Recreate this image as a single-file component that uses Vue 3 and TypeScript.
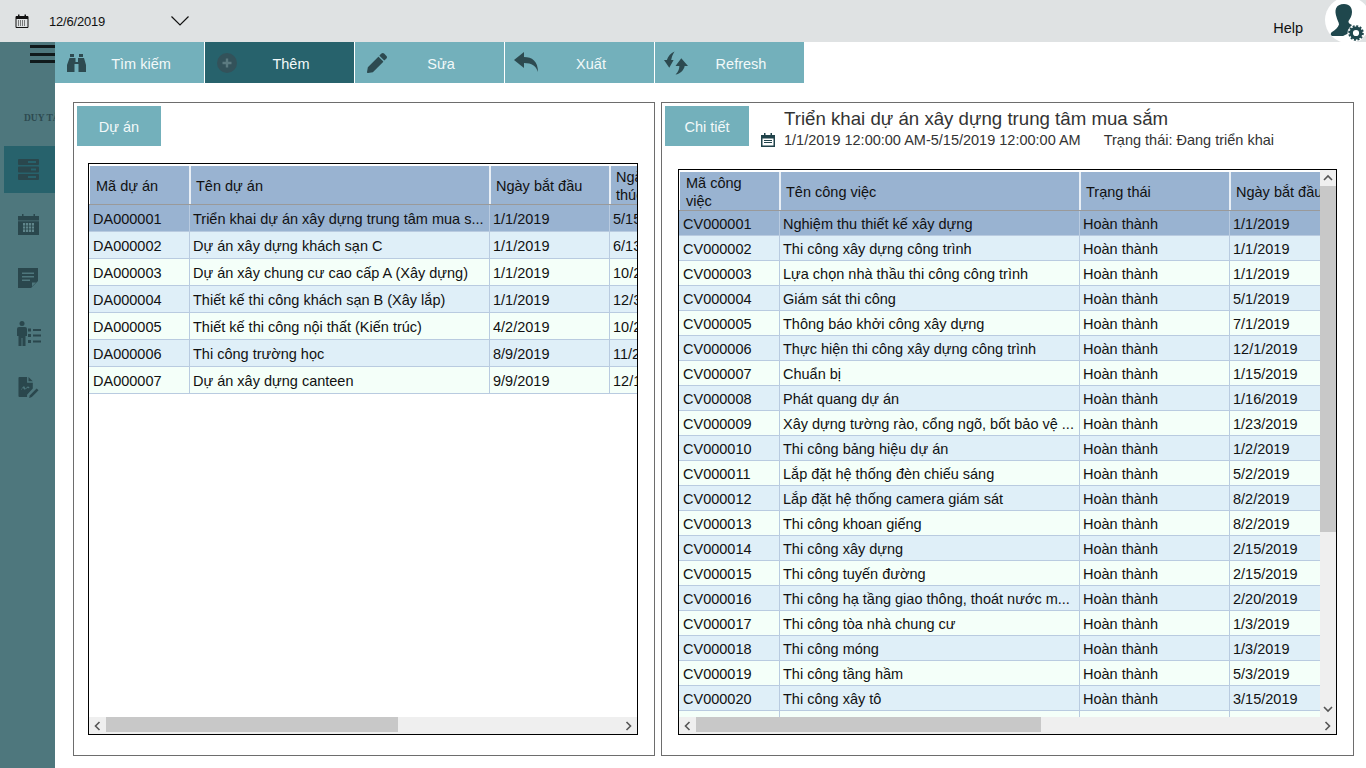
<script setup lang="ts">
const projects = [
  ['DA000001', 'Triển khai dự án xây dựng trung tâm mua s...', '1/1/2019', '5/15/2019'],
  ['DA000002', 'Dự án xây dựng khách sạn C', '1/1/2019', '6/13/2019'],
  ['DA000003', 'Dự án xây chung cư cao cấp A (Xây dựng)', '1/1/2019', '10/2/2019'],
  ['DA000004', 'Thiết kế thi công khách sạn B (Xây lắp)', '1/1/2019', '12/3/2019'],
  ['DA000005', 'Thiết kế thi công nội thất (Kiến trúc)', '4/2/2019', '10/2/2019'],
  ['DA000006', 'Thi công trường học', '8/9/2019', '11/2/2019'],
  ['DA000007', 'Dự án xây dựng canteen', '9/9/2019', '12/1/2019']
]

const tasks = [
  ['CV000001', 'Nghiệm thu thiết kế xây dựng', '1/1/2019'],
  ['CV000002', 'Thi công xây dựng công trình', '1/1/2019'],
  ['CV000003', 'Lựa chọn nhà thầu thi công công trình', '1/1/2019'],
  ['CV000004', 'Giám sát thi công', '5/1/2019'],
  ['CV000005', 'Thông báo khởi công xây dựng', '7/1/2019'],
  ['CV000006', 'Thực hiện thi công xây dựng công trình', '12/1/2019'],
  ['CV000007', 'Chuẩn bị', '1/15/2019'],
  ['CV000008', 'Phát quang dự án', '1/16/2019'],
  ['CV000009', 'Xây dựng tường rào, cổng ngõ, bốt bảo vệ ...', '1/23/2019'],
  ['CV000010', 'Thi công bảng hiệu dự án', '1/2/2019'],
  ['CV000011', 'Lắp đặt hệ thống đèn chiếu sáng', '5/2/2019'],
  ['CV000012', 'Lắp đặt hệ thống camera giám sát', '8/2/2019'],
  ['CV000013', 'Thi công khoan giếng', '8/2/2019'],
  ['CV000014', 'Thi công xây dựng', '2/15/2019'],
  ['CV000015', 'Thi công tuyến đường', '2/15/2019'],
  ['CV000016', 'Thi công hạ tầng giao thông, thoát nước m...', '2/20/2019'],
  ['CV000017', 'Thi công tòa nhà chung cư', '1/3/2019'],
  ['CV000018', 'Thi công móng', '1/3/2019'],
  ['CV000019', 'Thi công tầng hầm', '5/3/2019'],
  ['CV000020', 'Thi công xây tô', '3/15/2019']
]

const toolbar = ['Tìm kiếm', 'Thêm', 'Sửa', 'Xuất', 'Refresh']
</script>

<template>
  <div class="app">
    <header class="topbar">
      <svg class="date-icon" viewBox="0 0 14 14">
        <path d="M1 2.5h12v11H1z" fill="none" stroke="#111" />
        <path d="M1 2h12v3H1zM3 0.5h1.5v2.5H3zM9.5 0.5H11v2.5H9.5z" fill="#111" />
        <path d="M3 7h8M3 9h8M3 11h8" stroke="#111" stroke-dasharray="1 1" fill="none" />
      </svg>
      <span class="date-text">12/6/2019</span>
      <svg class="chevron" viewBox="0 0 18 10"><path d="M0.5 0.5L9 9l8.5-8.5" fill="none" stroke="#111" stroke-width="1.2" /></svg>
      <span class="help">Help</span>
      <div class="avatar">
        <svg viewBox="0 0 41 41" width="41" height="41">
          <path d="M19 4C25 4 27 8 27 12C27 16 25 19 23.500 21C23 23 25 24 27 25C25 27 24 30 24 33L18 36H8C5.500 36 5 33.500 7 32C10 30 13 28 14 24.500C14 22 12 20 11.500 17C10.500 14 10 11 11 8.500C12 5.500 15 4 19 4z" fill="#1f474d" />
          <circle cx="31" cy="33" r="8.500" fill="#fff" />
          <circle cx="31" cy="33" r="4.800" fill="none" stroke="#1f474d" stroke-width="3.400" />
          <circle cx="31" cy="33" r="6.800" fill="none" stroke="#1f474d" stroke-width="2" stroke-dasharray="2 1.560" />
        </svg>
      </div>
    </header>

    <div class="body">
      <aside class="sidebar">
        <div class="burger"><i></i><i></i><i></i></div>
        <div class="brand">DUY TÂN</div>
        <div class="side-item active">
          <svg viewBox="0 0 21 21">
            <path fill-rule="evenodd" d="M1 0h19a1 1 0 0 1 1 1v4a1 1 0 0 1-1 1H1a1 1 0 0 1-1-1V1a1 1 0 0 1 1-1zm9 2v2h8V2zM1 7.500h19a1 1 0 0 1 1 1v4a1 1 0 0 1-1 1H1a1 1 0 0 1-1-1v-4a1 1 0 0 1 1-1zm12 2v2h5v-2zM1 15h19a1 1 0 0 1 1 1v4a1 1 0 0 1-1 1H1a1 1 0 0 1-1-1v-4a1 1 0 0 1 1-1zm9 2v2h8v-2z" />
          </svg>
        </div>
        <div class="side-item">
          <svg viewBox="0 0 21 21">
            <path d="M0 2h4V0h1.500v2h10V0H17v2h4v4.500H0zM0 7.200h21V21H0z" />
            <path d="M5 9h11v9H5z" fill="#5f858b" />
            <path d="M7.500 9v9M10.500 9v9M13.500 9v9M5 12h11M5 15h11" stroke="#2a474d" stroke-width="0.800" fill="none" />
          </svg>
        </div>
        <div class="side-item">
          <svg viewBox="0 0 21 21">
            <path fill-rule="evenodd" d="M0 0h20v13l-7 7H0zM4 4.500v1.500h12V4.500zm0 3.500v1.500h12V8zm0 3.500V13h8v-1.500zM14 14.500v4l4-4z" />
          </svg>
        </div>
        <div class="side-item">
          <svg viewBox="0 0 24 25">
            <circle cx="5" cy="2.500" r="2.500" />
            <path d="M0 8a2 2 0 0 1 2-2h6a2 2 0 0 1 2 2v7H8.500v10H5.500v-8h-1v8H1.500V15H0zM11 7.500h3v3h-3zM16 8h8v2h-8zM11 13h3v3h-3zM16 13.500h8v2h-8zM11 19h3v3h-3zM16 19.500h8v2h-8z" />
          </svg>
        </div>
        <div class="side-item">
          <svg viewBox="0 0 21 22">
            <path fill-rule="evenodd" d="M0 1a1 1 0 0 1 1-1h8v6h6v6l-6 6.500V21H1a1 1 0 0 1-1-1zM10.500 0L15 4.500h-4.500zM3 13c1.500-3 3-4 3.500-2.500S7 13 8.500 11s2-1 3 0l-.5 1c-1-1-1.500-1-2.500 0-2 2-3 1-3.500-.5-.5-.5-1 .5-1.500 2z" />
            <path d="M12 19l7-7 2 2-7 7-3 1z" />
          </svg>
        </div>
      </aside>

      <main class="content">
        <nav class="toolbar">
          <div v-for="(label, i) in toolbar" :key="label" class="tool" :class="{ active: i === 1 }">
            <svg v-if="i === 0" class="tool-icon" viewBox="0 0 20 20">
              <path d="M3 1h4v3H3zM12 1h4v3h-4zM2.500 5h6v4H11V5h6l2 7v7h-7.500v-8h-4v8H0v-7z" />
            </svg>
            <svg v-else-if="i === 1" class="tool-icon" viewBox="0 0 20 20">
              <circle cx="10" cy="10" r="10" fill="#33525a" />
              <path d="M8.800 5.500h2.400v3.300h3.300v2.400h-3.300v3.300H8.800v-3.300H5.500V8.800h3.300z" fill="#5b7a80" />
            </svg>
            <svg v-else-if="i === 2" class="tool-icon" viewBox="0 0 512 512">
              <path d="M497.900 142.100l-46.100 46.100c-4.700 4.700-12.300 4.700-17 0l-111-111c-4.700-4.700-4.700-12.300 0-17l46.100-46.100c18.700-18.700 49.100-18.700 67.900 0l60.100 60.100c18.800 18.700 18.800 49.100 0 67.900zM284.200 99.800L21.600 362.400.4 483.900c-2.900 16.400 11.400 30.600 27.800 27.800l121.500-21.300 262.600-262.600c4.700-4.700 4.700-12.300 0-17l-111-111c-4.800-4.700-12.400-4.700-17.100 0z" />
            </svg>
            <svg v-else-if="i === 3" class="tool-icon wide" viewBox="0 0 24 22">
              <path d="M0 8L10 0v5c8 0 14 4 14 15-2-6-6-9-14-9v5z" />
            </svg>
            <svg v-else class="tool-icon wide refresh" viewBox="0 0 25 24">
              <path d="M11 0C7 2 4 5 3 9H0L5.500 17L10 9H7.500C8 6 9 3 11 0z" />
              <path d="M18 7L25 15H21.500C21 19 17 23 12 24C15 21 16 18 16 15H12z" />
            </svg>
            <span class="tool-label">{{ label }}</span>
          </div>
        </nav>

        <div class="panels">
          <section class="panel left">
            <div class="panel-head">
              <div class="tab">Dự án</div>
            </div>
            <div class="grid">
              <div class="grid-main">
                <div class="viewport">
                  <div class="head row-cols">
                    <div class="hcell">Mã dự án</div>
                    <div class="hcell">Tên dự án</div>
                    <div class="hcell">Ngày bắt đầu</div>
                    <div class="hcell">Ngày kết thúc</div>
                  </div>
                  <div v-for="(p, i) in projects" :key="p[0]" class="row row-cols" :class="{ selected: i === 0, alt: i % 2 === 1 }">
                    <div v-for="(c, j) in p" :key="j" class="cell">{{ c }}</div>
                  </div>
                </div>
              </div>
              <div class="hbar">
                <svg class="arrow" viewBox="0 0 8 10"><path d="M6 1L2 5l4 4" /></svg>
                <div class="track"><div class="thumb"></div></div>
                <svg class="arrow" viewBox="0 0 8 10"><path d="M2 1l4 4-4 4" /></svg>
              </div>
            </div>
          </section>

          <section class="panel right">
            <div class="panel-head">
              <div class="tab">Chi tiết</div>
              <div class="info">
                <div class="info-title">Triển khai dự án xây dựng trung tâm mua sắm</div>
                <div class="info-line">
                  <svg class="info-icon" viewBox="0 0 14 14">
                    <path fill-rule="evenodd" d="M0 2h3V0h1.500v2h5V0H11v2h3v12H0zm1.500 3.500V12.500h11V5.500zM3 7h8v1H3zm0 2h8v1H3z" />
                  </svg>
                  <span class="info-date">1/1/2019 12:00:00 AM-5/15/2019 12:00:00 AM</span>
                  <span>Trạng thái: Đang triển khai</span>
                </div>
              </div>
            </div>
            <div class="grid">
              <div class="grid-main">
                <div class="viewport">
                  <div class="head row-cols">
                    <div class="hcell">Mã công việc</div>
                    <div class="hcell">Tên công việc</div>
                    <div class="hcell">Trạng thái</div>
                    <div class="hcell">Ngày bắt đầu</div>
                  </div>
                  <div v-for="(t, i) in tasks" :key="t[0]" class="row row-cols" :class="{ selected: i === 0, alt: i % 2 === 1 }">
                    <div class="cell">{{ t[0] }}</div>
                    <div class="cell">{{ t[1] }}</div>
                    <div class="cell">Hoàn thành</div>
                    <div class="cell">{{ t[2] }}</div>
                  </div>
                  <div class="row row-cols">
                    <div class="cell"></div><div class="cell"></div><div class="cell"></div><div class="cell"></div>
                  </div>
                </div>
                <div class="vbar">
                  <svg class="arrow" viewBox="0 0 10 8"><path d="M1 6l4-4 4 4" /></svg>
                  <div class="vtrack"><div class="vthumb"></div></div>
                  <svg class="arrow" viewBox="0 0 10 8"><path d="M1 2l4 4 4-4" /></svg>
                </div>
              </div>
              <div class="hbar">
                <svg class="arrow" viewBox="0 0 8 10"><path d="M6 1L2 5l4 4" /></svg>
                <div class="track"><div class="thumb"></div></div>
                <svg class="arrow" viewBox="0 0 8 10"><path d="M2 1l4 4-4 4" /></svg>
              </div>
            </div>
          </section>
        </div>
      </main>
    </div>
  </div>
</template>

<style scoped>
.app {
  width: 1366px;
  height: 768px;
  display: flex;
  flex-direction: column;
  overflow: hidden;
  background: #fff;
  color: #111;
  font-family: "Liberation Sans", Arial, sans-serif;
  font-size: 14.5px;
}

.topbar {
  height: 42px;
  flex: none;
  display: flex;
  align-items: center;
  background: #dfe2e3;
  position: relative;
  overflow: hidden;
}

.date-icon {
  width: 14px;
  height: 14px;
  margin-left: 15px;
}

.date-text {
  margin-left: 20px;
  font-size: 13px;
  letter-spacing: -0.2px;
}

.chevron {
  width: 18px;
  height: 10px;
  margin-left: 66px;
  margin-top: -1px;
}

.help {
  margin-left: auto;
  margin-right: 63px;
  margin-top: 14px;
}

.avatar {
  position: absolute;
  left: 1325px;
  top: -3px;
  width: 46px;
  height: 46px;
  padding-top: 3px;
  box-sizing: border-box;
  background: #fff;
  border-radius: 50%;
}

.avatar svg {
  display: block;
}

.body {
  flex: 1;
  display: flex;
  min-height: 0;
}

.sidebar {
  width: 55px;
  flex: none;
  background: #4e777d;
  display: flex;
  flex-direction: column;
  overflow: hidden;
}

.burger {
  display: flex;
  flex-direction: column;
  gap: 4.500px;
  margin: 3px 0 0 30px;
  height: 18px;
}

.burger i {
  display: block;
  height: 3px;
  background: #10191b;
}

.brand {
  margin: 50px 0 0 24px;
  height: 33px;
  white-space: nowrap;
  font-family: "Liberation Serif", serif;
  font-weight: bold;
  font-size: 9.500px;
  color: #2d4a50;
}

.side-item {
  height: 47px;
  margin: 0 0 7.500px 4px;
  padding-left: 14px;
  display: flex;
  align-items: center;
  flex: none;
}

.side-item.active {
  background: #27626c;
}

.side-item svg {
  width: 21px;
  height: 21px;
  fill: #2a474d;
}

.side-item:nth-child(6) svg {
  width: 24px;
  height: 25px;
  margin-left: -1px;
}

.content {
  flex: 1;
  display: flex;
  flex-direction: column;
  min-width: 0;
}

.toolbar {
  height: 41px;
  flex: none;
  display: flex;
  gap: 1px;
  width: 749px;
}

.tool {
  width: 149px;
  flex: none;
  display: flex;
  align-items: center;
  padding-left: 12px;
  box-sizing: border-box;
  background: #73b0bb;
  color: #f2f9f9;
}

.tool.active {
  background: #27626c;
}

.tool-icon {
  width: 20px;
  height: 20px;
  flex: none;
  fill: #2d4a50;
  overflow: visible;
}

.tool-icon.wide {
  width: 24px;
  height: 22px;
  margin-left: -3px;
  margin-right: -1px;
}

.tool-icon.refresh {
  height: 24px;
}

.tool-label {
  flex: 1;
  text-align: center;
  padding: 2px 9px 0 0;
}

.panels {
  flex: 1;
  display: flex;
  gap: 6px;
  padding: 19px 12px 12px 18px;
  min-height: 0;
}

.panel {
  border: 1px solid #6d6d6d;
  box-sizing: border-box;
  padding: 3px 16px 20px 3px;
  display: flex;
  flex-direction: column;
}

.panel.left {
  width: 582px;
}

.panel.right {
  width: 693px;
}

.panel-head {
  display: flex;
  flex: none;
}

.left .panel-head {
  margin-bottom: 17px;
}

.right .panel-head {
  margin-bottom: 23px;
}

.tab {
  width: 84px;
  height: 40px;
  flex: none;
  display: flex;
  align-items: center;
  justify-content: center;
  padding-top: 1px;
  box-sizing: border-box;
  background: #73b0bb;
  color: #f2f9f9;
}

.info {
  margin-left: 12px;
  margin-top: 2px;
  height: 38px;
  color: #333;
  white-space: nowrap;
}

.info-title {
  margin-left: 23px;
  font-size: 18.670px;
  line-height: 22px;
}

.info-line {
  display: flex;
  align-items: center;
  margin-top: 1px;
  height: 18px;
}

.info-icon {
  width: 14px;
  height: 14px;
  margin-right: 9px;
  fill: #21434a;
}

.info-date {
  margin-right: 23px;
}

.grid {
  flex: 1;
  min-height: 0;
  border: 1px solid #000;
  display: flex;
  flex-direction: column;
}

.left .grid {
  margin-left: 11px;
}

.right .grid {
  margin-left: 13px;
}

.grid-main {
  flex: 1;
  min-height: 0;
  display: flex;
}

.viewport {
  flex: 1;
  min-width: 0;
  overflow: hidden;
  padding-top: 2px;
}

.row-cols {
  display: grid;
  width: max-content;
}

.left .row-cols {
  grid-template-columns: 101px 300px 120px 120px;
}

.right .row-cols {
  grid-template-columns: 101px 300px 150px 150px;
}

.head {
  height: 39px;
  box-sizing: border-box;
  background: #99b3d1;
  border-bottom: 1px solid #9a9a9a;
}

.hcell {
  display: flex;
  align-items: center;
  padding: 2px 6px 0;
  box-sizing: border-box;
  border-right: 1px solid #e9eff5;
  line-height: 18px;
  overflow: hidden;
}

.hcell:first-child {
  border-left: 1px solid #fff;
}

.hcell + .hcell {
  border-left: 1px solid #e9eff5;
  padding-left: 5px;
}

.left .hcell:last-child {
  padding-right: 40px;
}

.right .hcell:first-child {
  padding-right: 30px;
}

.row {
  background: #f4fff9;
}

.left .row {
  height: 27px;
}

.right .row {
  height: 25px;
}

.row.alt {
  background: #dfeff8;
}

.row.selected {
  background: #99b3d1;
}

.cell {
  display: flex;
  align-items: center;
  padding: 2px 0 0 3px;
  box-sizing: border-box;
  white-space: nowrap;
  overflow: hidden;
  border-right: 1px solid #b9cbe0;
  border-bottom: 1px solid #b9cbe0;
}

.cell:first-child {
  padding-left: 4px;
}

.hbar {
  height: 17px;
  flex: none;
  display: flex;
  align-items: center;
  background: #efefef;
}

.hbar .arrow {
  width: 17px;
  height: 10px;
  flex: none;
}

.arrow path {
  fill: none;
  stroke: #555;
  stroke-width: 1.600;
}

.track {
  flex: 1;
  height: 100%;
}

.thumb {
  height: 15px;
  background: #c8c8c8;
}

.left .thumb {
  width: 292px;
}

.right .thumb {
  width: 345px;
}

.vbar {
  width: 16px;
  flex: none;
  display: flex;
  flex-direction: column;
  align-items: center;
  background: #efefef;
}

.vbar .arrow {
  width: 10px;
  height: 16px;
  flex: none;
}

.vtrack {
  flex: 1;
  width: 100%;
}

.vthumb {
  height: 346px;
  background: #c8c8c8;
}
</style>

<style>
html,
body {
  margin: 0;
  overflow: hidden;
}
</style>
